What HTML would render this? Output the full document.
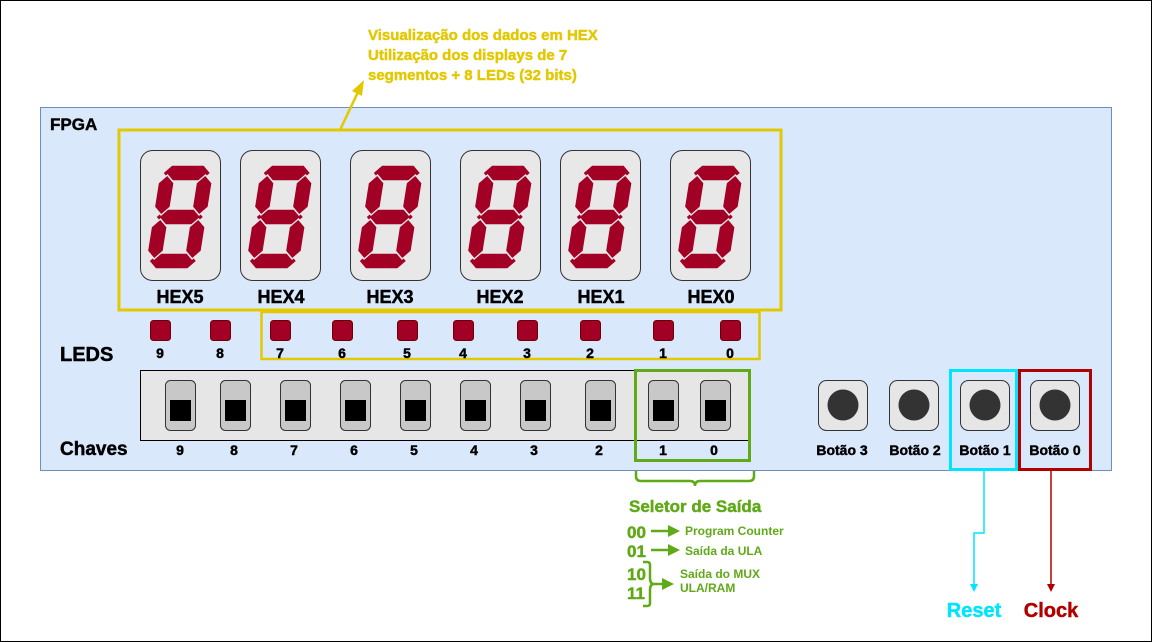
<!DOCTYPE html>
<html><head><meta charset="utf-8"><style>html,body{margin:0;padding:0;background:#fff}svg{display:block}text{font-family:"Liberation Sans",Arial,sans-serif;font-weight:700;stroke-width:0.45px}</style></head><body>
<svg width="1152" height="642" viewBox="0 0 1152 642" xmlns="http://www.w3.org/2000/svg">
<defs>
<g id="digit">
<rect x="0.5" y="0.5" width="80" height="130" rx="12" fill="#e8e8e8" stroke="#333" stroke-width="1"/>
<g transform="translate(21,15) skewX(-9)" fill="#a20025" stroke="#e8e8e8" stroke-width="1.5">
<polygon points="3,8 11,0 43,0 51,8 43,16 11,16"/>
<polygon points="3,52 11,44 43,44 51,52 43,60 11,60"/>
<polygon points="3,96 11,88 43,88 51,96 43,104 11,104"/>
<polygon points="8,10 16,18 16,42 8,50 0,42 0,18"/>
<polygon points="46,10 54,18 54,42 46,50 38,42 38,18"/>
<polygon points="8,54 16,62 16,86 8,94 0,86 0,62"/>
<polygon points="46,54 54,62 54,86 46,94 38,86 38,62"/>
</g>
</g>
<g id="sw">
<rect x="0.5" y="0.5" width="30" height="50" rx="5" fill="#c8c8c8" stroke="#333"/>
<rect x="5" y="20" width="21" height="21" fill="#000"/>
</g>
<g id="btn">
<rect x="0.5" y="0.5" width="49" height="50" rx="8" fill="#e6e6e6" stroke="#333"/>
<circle cx="25" cy="25" r="15.5" fill="#333"/>
</g>
</defs>
<rect x="0.5" y="0.5" width="1151" height="641" fill="#fff" stroke="#000"/>
<rect x="40.5" y="107.5" width="1071" height="363" fill="#dae8fc" stroke="#6c8ebf"/>
<text x="50" y="130" font-size="17" stroke="#000">FPGA</text>
<g font-size="15" fill="#e3c800" stroke="#e3c800">
<text x="368" y="40">Visualização dos dados em HEX</text>
<text x="368" y="60">Utilização dos displays de 7</text>
<text x="368" y="80">segmentos + 8 LEDs (32 bits)</text>
</g>
<line x1="340" y1="130" x2="359" y2="90" stroke="#e3c800" stroke-width="2.5"/>
<polygon points="364,80 362,96 352,91" fill="#e3c800"/>
<rect x="119" y="130" width="662" height="180" fill="none" stroke="#e3c800" stroke-width="3"/>
<use href="#digit" x="140" y="150"/><use href="#digit" x="240" y="150"/><use href="#digit" x="350" y="150"/>
<use href="#digit" x="460" y="150"/><use href="#digit" x="560" y="150"/><use href="#digit" x="670" y="150"/>
<g font-size="18" text-anchor="middle" stroke="#000">
<text x="180" y="303">HEX5</text><text x="281" y="303">HEX4</text><text x="390" y="303">HEX3</text>
<text x="500" y="303">HEX2</text><text x="601" y="303">HEX1</text><text x="711" y="303">HEX0</text>
</g>
<rect x="261.5" y="312" width="498" height="47" fill="none" stroke="#e3c800" stroke-width="2.5"/>
<g fill="#a20025" stroke="#6f0000" stroke-width="1">
<rect x="150.5" y="320.5" width="20" height="20" rx="3"/><rect x="210.5" y="320.5" width="20" height="20" rx="3"/>
<rect x="270.5" y="320.5" width="20" height="20" rx="3"/><rect x="332.5" y="320.5" width="20" height="20" rx="3"/>
<rect x="397.5" y="320.5" width="20" height="20" rx="3"/><rect x="453.5" y="320.5" width="20" height="20" rx="3"/>
<rect x="517.5" y="320.5" width="20" height="20" rx="3"/><rect x="580.5" y="320.5" width="20" height="20" rx="3"/>
<rect x="653.5" y="320.5" width="20" height="20" rx="3"/><rect x="720.5" y="320.5" width="20" height="20" rx="3"/>
</g>
<text x="60" y="361" font-size="20" stroke="#000">LEDS</text>
<g font-size="14" text-anchor="middle" stroke="#000">
<text x="160" y="358">9</text><text x="220" y="358">8</text><text x="280" y="358">7</text><text x="342" y="358">6</text>
<text x="407" y="358">5</text><text x="463" y="358">4</text><text x="527" y="358">3</text><text x="590" y="358">2</text>
<text x="663" y="358">1</text><text x="730" y="358">0</text>
</g>
<rect x="140.5" y="370.5" width="609" height="70" fill="#e6e6e6" stroke="#000"/>
<use href="#sw" x="165" y="380"/><use href="#sw" x="220" y="380"/><use href="#sw" x="280" y="380"/><use href="#sw" x="340" y="380"/>
<use href="#sw" x="400" y="380"/><use href="#sw" x="460" y="380"/><use href="#sw" x="520" y="380"/><use href="#sw" x="585" y="380"/>
<use href="#sw" x="648" y="380"/><use href="#sw" x="700" y="380"/>
<text x="60" y="455" font-size="19" stroke="#000">Chaves</text>
<g font-size="14" text-anchor="middle" stroke="#000">
<text x="180" y="455">9</text><text x="234" y="455">8</text><text x="294" y="455">7</text><text x="354" y="455">6</text>
<text x="414" y="455">5</text><text x="474" y="455">4</text><text x="534" y="455">3</text><text x="599" y="455">2</text>
<text x="663" y="455">1</text><text x="714" y="455">0</text>
</g>
<rect x="635.5" y="370.5" width="114" height="90" fill="none" stroke="#60a917" stroke-width="3"/>
<path d="M636 471 v5 q0 5 5 5 h49 q5 0 5 5 q0 -5 5 -5 h49 q5 0 5 -5 v-5" fill="none" stroke="#60a917" stroke-width="2.5"/>
<g fill="#60a917" stroke="#60a917">
<text x="629" y="512" font-size="17">Seletor de Saída</text>
<text x="627" y="538" font-size="17">00</text><text x="627" y="557" font-size="17">01</text>
<text x="627" y="580" font-size="17">10</text><text x="627" y="599" font-size="17">11</text>
</g>
<g fill="#60a917">
<text x="685" y="535" font-size="12" font-weight="400">Program Counter</text>
<text x="685" y="555" font-size="12" font-weight="400">Saída da ULA</text>
<text x="680" y="578" font-size="12" font-weight="400">Saída do MUX</text>
<text x="680" y="592" font-size="12" font-weight="400">ULA/RAM</text>
<polygon points="680,531 668,525 668,537"/><polygon points="680,550 668,544 668,556"/><polygon points="674,584 662,578 662,590"/>
</g>
<g stroke="#60a917" stroke-width="2.5" fill="none">
<line x1="651" y1="531" x2="670" y2="531"/><line x1="651" y1="550" x2="670" y2="550"/>
<path d="M643 562 h4 q3 0 3 3 v13 q0 6 4 6 h10 M654 584 q-4 0 -4 6 v13 q0 3 -3 3 h-4"/>
</g>
<use href="#btn" x="818" y="380"/><use href="#btn" x="889" y="380"/><use href="#btn" x="960" y="380"/><use href="#btn" x="1030" y="380"/>
<g font-size="14" text-anchor="middle" stroke="#000">
<text x="842" y="455">Botão 3</text><text x="915" y="455">Botão 2</text><text x="985" y="455">Botão 1</text><text x="1055" y="455">Botão 0</text>
</g>
<rect x="950.5" y="370.5" width="66" height="99" fill="none" stroke="#00e5ff" stroke-width="3"/>
<rect x="1019.5" y="370.5" width="71" height="99" fill="none" stroke="#b20000" stroke-width="3"/>
<path d="M984 471 v62 h-10 v55" fill="none" stroke="#00e5ff" stroke-width="1.5"/>
<polygon points="974,592 970,584 978,584" fill="#00e5ff"/>
<line x1="1051" y1="471" x2="1051" y2="588" stroke="#b20000" stroke-width="1.5"/>
<polygon points="1051,592 1047,584 1055,584" fill="#b20000"/>
<text x="974" y="617" font-size="20" fill="#00e5ff" stroke="#00e5ff" text-anchor="middle">Reset</text>
<text x="1051" y="617" font-size="20" fill="#b20000" stroke="#b20000" text-anchor="middle">Clock</text>
</svg>
</body></html>
